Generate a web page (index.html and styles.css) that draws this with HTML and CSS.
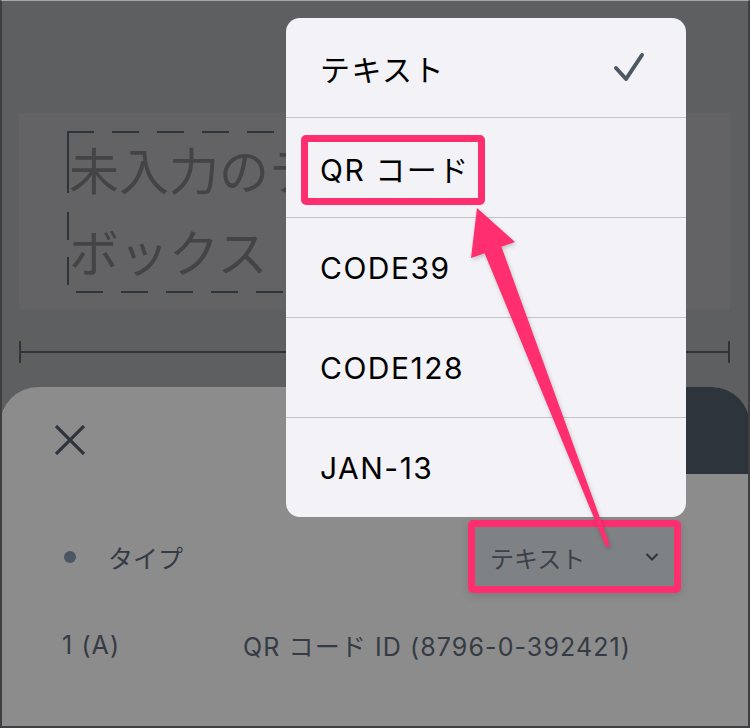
FILE: index.html
```html
<!DOCTYPE html>
<html lang="ja">
<head>
<meta charset="utf-8">
<link rel="stylesheet" href="styles.css">
</head>
<body>
<div class="screen">
  <div class="canvas">
    <div class="field">
      <div class="dashbox">
        <p class="placeholder">未入力のテキスト<br>ボックス</p>
      </div>
    </div>
    <div class="ruler"><span class="tick"></span><span class="line"></span><span class="tick"></span></div>
  </div>
  <div class="sheet">
    <div class="sheet-head">
      <svg class="close" viewBox="0 0 30 30" width="30" height="30"><path d="M1 1 L29 29 M29 1 L1 29" stroke="#2e343b" stroke-width="3.2" fill="none"/></svg>
      <div class="save"></div>
    </div>
    <div class="type-row">
      <span class="dot"></span>
      <span class="label">タイプ</span>
      <div class="select">
        <span>テキスト</span>
        <svg viewBox="0 0 14 10" width="14" height="10"><path d="M1.5 2 L7 7.5 L12.5 2" stroke="#2e343b" stroke-width="2" fill="none"/></svg>
      </div>
    </div>
    <div class="id-row">
      <span class="col1">1 (A)</span>
      <span>QR コード ID (8796-0-392421)</span>
    </div>
  </div>

  <div class="menu">
    <div class="item"><span>テキスト</span>
      <svg class="check" viewBox="0 0 32 32" width="32" height="32"><path d="M3 16 L13 27 L29 3" stroke="#4d5862" stroke-width="4" stroke-linecap="round" stroke-linejoin="round" fill="none"/></svg>
    </div>
    <div class="item"><span>QR コード</span></div>
    <div class="item"><span>CODE39</span></div>
    <div class="item"><span>CODE128</span></div>
    <div class="item"><span>JAN-13</span></div>
  </div>

  <div class="hl hl-qr"></div>
  <div class="hl hl-select"></div>
  <svg class="arrow" viewBox="0 0 750 728" width="750" height="728">
    <polygon points="477,208 515,242 501.4,246.7 610,545.5 606,547 484.6,253.3 471,258" fill="#ff2e6f"/>
  </svg>
</div>
</body>
</html>
```

FILE: styles.css
```css
* { box-sizing: border-box; }
body { margin: 0; }

.screen {
  position: relative;
  width: 750px;
  height: 728px;
  background: #5e5f61;
  display: flex;
  flex-direction: column;
  overflow: hidden;
  font-family: "Inter", "Noto Sans CJK JP", sans-serif;
}
.screen::after {
  content: "";
  position: absolute;
  inset: 0;
  border-left: 2px solid #3f3f41;
  border-right: 2px solid #3f3f41;
  border-bottom: 2px solid #3f3f41;
  border-top: 1px solid #a8a8a8;
  pointer-events: none;
}

.canvas {
  flex: none;
  height: 387px;
  padding: 113px 20px 0 19px;
}
.field {
  height: 197px;
  background: #636365;
  padding: 18px 0 0 48px;
}
.dashbox {
  width: 470px;
  height: 162px;
  padding-left: 2px;
  background:
    repeating-linear-gradient(90deg, #2e343b 0 27px, transparent 27px 45px) left top / 100% 2px no-repeat,
    repeating-linear-gradient(90deg, transparent 0 9px, #2e343b 9px 36px, transparent 36px 45px) left bottom / 100% 2px no-repeat,
    linear-gradient(180deg, #2e343b 0 62px, transparent 62px 81px, #2e343b 81px 109px, transparent 109px 126px, #2e343b 126px 154px, transparent 154px) left top / 2px 100% no-repeat;
}
.placeholder {
  margin: 0;
  font-size: 50px;
  line-height: 82px;
  color: #444446;
  white-space: nowrap;
}

.ruler {
  margin-top: 31px;
  height: 22px;
  display: flex;
  align-items: center;
}
.tick { width: 2px; height: 22px; background: #2e343b; }
.line { flex: 1; height: 2px; background: #2e343b; }

.sheet {
  flex: 1;
  background: #8c8c8c;
  border-radius: 38px 38px 0 0;
  overflow: hidden;
  color: #343b44;
}
.sheet-head {
  height: 87px;
  display: flex;
  justify-content: space-between;
}
.close { margin: 38px 0 0 55px; }
.save {
  width: 220px;
  height: 87px;
  background: #2e343b;
}

.type-row {
  margin-top: 53px;
  height: 60px;
  display: flex;
  align-items: center;
  padding-left: 64px;
}
.dot {
  width: 12px;
  height: 12px;
  border-radius: 50%;
  background: #4b5563;
}
.label {
  margin-left: 32px;
  font-size: 25px;
}
.select {
  margin-left: auto;
  margin-right: 76px;
  width: 199px;
  height: 60px;
  background: #7f8284;
  display: flex;
  align-items: center;
  justify-content: space-between;
  padding: 0 15px 0 15px;
  font-size: 24px;
  color: #3a4149;
}

.id-row {
  margin-top: 43px;
  height: 30px;
  display: flex;
  align-items: center;
  padding-left: 62px;
  font-size: 25px;
  letter-spacing: 1.1px;
}
.col1 { width: 181px; }

.menu {
  position: absolute;
  left: 286px;
  top: 18px;
  width: 400px;
  height: 499px;
  background: #f2f2f7;
  border-radius: 14px;
  overflow: hidden;
}
.item {
  height: 100px;
  border-bottom: 1px solid #c4c4c8;
  display: flex;
  align-items: center;
  justify-content: space-between;
  padding: 0 41px 0 34px;
  font-size: 30px;
  letter-spacing: 1.5px;
  color: #000;
}
.item:last-child { border-bottom: none; height: 99px; }

.hl {
  position: absolute;
  border: 7px solid #ff2e6f;
  border-radius: 5px;
}
.hl-qr { left: 301px; top: 135px; width: 184px; height: 70px; }
.hl-select {
  left: 468px; top: 520px; width: 213px; height: 73px;
  box-shadow: 0 3px 10px rgba(0,0,0,0.12);
}
.arrow {
  position: absolute;
  left: 0;
  top: 0;
  filter: drop-shadow(1px 2px 2px rgba(0,0,0,0.2));
}
```
